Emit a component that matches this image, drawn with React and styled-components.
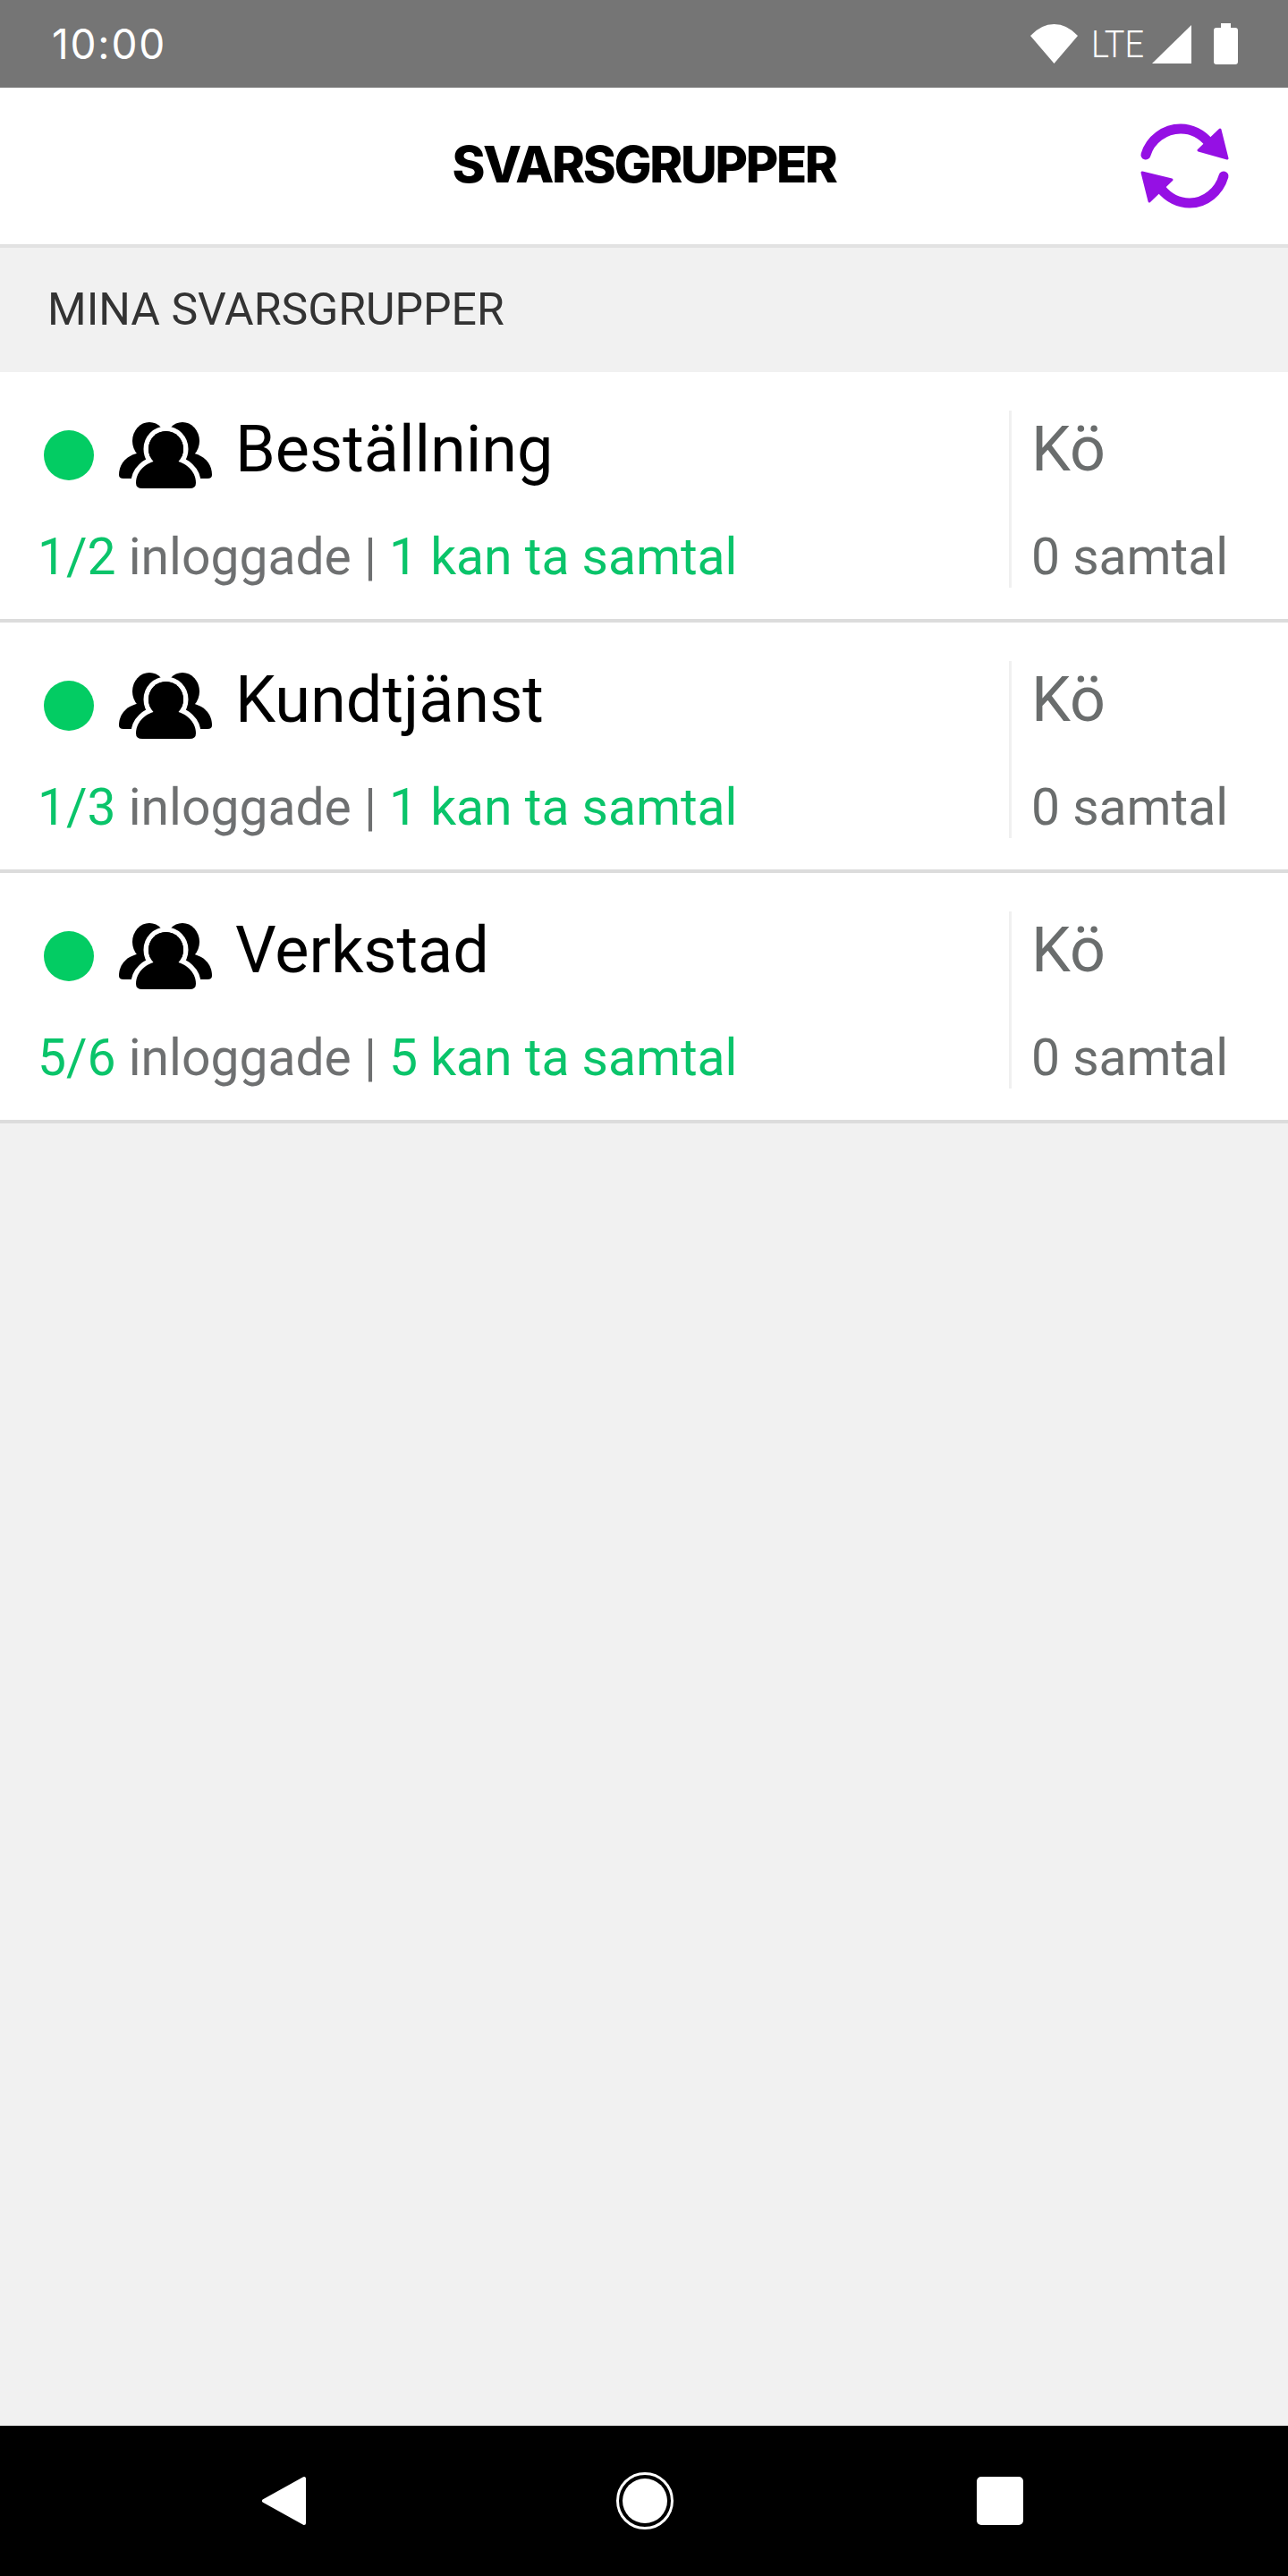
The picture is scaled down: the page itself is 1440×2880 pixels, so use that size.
import React from 'react'
import styled, { createGlobalStyle } from 'styled-components'

const GlobalStyle = createGlobalStyle`
  html, body {
    margin: 0;
    padding: 0;
    background: #f1f1f1;
  }
`

const Screen = styled.div`
  width: 1440px;
  height: 2880px;
  display: flex;
  flex-direction: column;
  background: #f1f1f1;
  font-family: Roboto, "Liberation Sans", sans-serif;
`

const StatusBar = styled.div`
  height: 98px;
  flex: none;
  display: flex;
  align-items: center;
  justify-content: space-between;
  padding: 0 56px 0 58px;
  box-sizing: border-box;
  background: #757575;
  color: #fff;
`

const Clock = styled.div`
  font-family: Inter, Roboto, sans-serif;
  font-size: 46px;
  font-weight: 400;
  letter-spacing: 1.8px;
  line-height: 98px;
`

const StatusIcons = styled.div`
  display: flex;
  align-items: center;
`

const Lte = styled.span`
  font-size: 43px;
  font-weight: 300;
  line-height: 98px;
  margin: 0 10px 0 15px;
  transform: scaleX(0.88);
  transform-origin: left center;
  width: 58px;
`

const Header = styled.header`
  height: 179px;
  flex: none;
  box-sizing: border-box;
  display: flex;
  align-items: center;
  justify-content: center;
  position: relative;
  background: #fff;
  border-bottom: 4px solid #e2e2e2;
`

const Title = styled.h1`
  margin: 0 0 4px;
  font-family: Inter, "Liberation Sans", sans-serif;
  font-size: 56px;
  font-weight: 800;
  letter-spacing: -2.3px;
  color: #000;
`

const RefreshButton = styled.div`
  position: absolute;
  top: 22px;
  right: 50px;
  width: 130px;
  height: 120px;
`

const SectionTitle = styled.div`
  height: 139px;
  flex: none;
  box-sizing: border-box;
  padding-left: 53px;
  font-size: 50px;
  font-weight: 400;
  line-height: 139px;
  color: #333;
`

const Row = styled.div`
  height: 280px;
  flex: none;
  box-sizing: border-box;
  display: flex;
  padding-top: 43px;
  background: #fff;
  border-bottom: 4px solid #dcdcdc;
`

const Main = styled.div`
  width: 1128px;
  flex: none;
`

const NameLine = styled.div`
  display: flex;
  align-items: center;
  height: 100px;
  padding-left: 49px;
`

const Dot = styled.span`
  width: 56px;
  height: 56px;
  border-radius: 50%;
  background: #03cc63;
  flex: none;
`

const Name = styled.span`
  font-size: 72px;
  font-weight: 400;
  line-height: 100px;
  color: #000;
  margin: -12px 0 0 25px;
`

const Stats = styled.div`
  margin-top: 28px;
  padding-left: 42px;
  font-size: 57px;
  line-height: 72px;
  color: #6e7071;
`

const Green = styled.span`
  color: #0ac46a;
`

const Queue = styled.div`
  flex: none;
  height: 198px;
  box-sizing: border-box;
  padding-left: 22px;
  border-left: 3px solid #f0f0f0;
  color: #6a6d6d;
`

const QueueTitle = styled.div`
  font-size: 70px;
  line-height: 100px;
  margin-top: -7px;
`

const QueueCount = styled.div`
  margin-top: 35px;
  font-size: 57px;
  line-height: 72px;
`

const NavBar = styled.div`
  margin-top: auto;
  height: 168px;
  flex: none;
  display: flex;
  align-items: center;
  padding-left: 116px;
  background: #000;
`

const NavSlot = styled.div`
  width: ${p => p.$width}px;
  display: flex;
  justify-content: center;
`

const Wifi = () => (
  <svg width="53" height="44" viewBox="0 0 53 44">
    <path d="M26.5 44 L0 13 Q12 0 26.5 0 Q41 0 53 13 Z" fill="#fff" />
  </svg>
)

const Signal = () => (
  <svg width="44" height="43" viewBox="0 0 44 43">
    <path d="M44 0 V43 H0 Z" fill="#fff" />
  </svg>
)

const Battery = () => (
  <svg width="27" height="46" viewBox="0 0 27 46" style={{ marginLeft: 25 }}>
    <path d="M8 0 H19 V5 H24 Q27 5 27 8 V43 Q27 46 24 46 H3 Q0 46 0 43 V8 Q0 5 3 5 H8 Z" fill="#fff" />
  </svg>
)

// drawn in crop coordinates of the reference, hence the odd viewBox
const Refresh = () => (
  <svg width="130" height="120" viewBox="0 0 130 120">
    <g fill="none" stroke="#9510e4" strokeWidth="11" strokeLinecap="round">
      <path d="M21 53 C26 36 42 24 60 24 C72 24 84 30 92 40" />
      <path d="M108 77 C103 94 88 107 70 107 C58 107 46 101 38 91" />
    </g>
    <g fill="#9510e4" stroke="#9510e4" strokeWidth="3" strokeLinejoin="round">
      <path d="M104 25 L112 57 L80 48 Z" />
      <path d="M17 73 L50 81 L25 105 Z" />
    </g>
  </svg>
)

const GroupIcon = () => (
  <svg width="106" height="76" viewBox="102 23 106 76" style={{ marginLeft: 27, flex: 'none' }}>
    <ellipse cx="137" cy="45" rx="19" ry="21" fill="#000" />
    <ellipse cx="174" cy="45" rx="19" ry="21" fill="#000" />
    <path d="M103 83 C103 70 112 60 128 58 L146 58 L146 87 L108 87 Q103 87 103 83 Z" fill="#000" />
    <path d="M207 83 C207 70 198 60 182 58 L164 58 L164 87 L202 87 Q207 87 207 83 Z" fill="#000" />
    <g fill="#000" stroke="#fff" strokeWidth="11" paintOrder="stroke">
      <ellipse cx="155.5" cy="54" rx="19.5" ry="20" />
      <path d="M122 92 C122 78 134 69 146 67 L165 67 C177 69 189 78 189 92 Q189 98 182 98 L129 98 Q122 98 122 92 Z" />
    </g>
    <ellipse cx="155.5" cy="54" rx="19.5" ry="20" fill="#000" />
  </svg>
)

const groups = [
  { name: 'Beställning', logged: '1/2', ready: 1 },
  { name: 'Kundtjänst', logged: '1/3', ready: 1 },
  { name: 'Verkstad', logged: '5/6', ready: 5 },
]

export default function App() {
  return (
    <Screen>
      <GlobalStyle />
      <StatusBar>
        <Clock>10:00</Clock>
        <StatusIcons>
          <Wifi />
          <Lte>LTE</Lte>
          <Signal />
          <Battery />
        </StatusIcons>
      </StatusBar>
      <Header>
        <Title>SVARSGRUPPER</Title>
        <RefreshButton>
          <Refresh />
        </RefreshButton>
      </Header>
      <SectionTitle>MINA SVARSGRUPPER</SectionTitle>
      {groups.map(group => (
        <Row key={group.name}>
          <Main>
            <NameLine>
              <Dot />
              <GroupIcon />
              <Name>{group.name}</Name>
            </NameLine>
            <Stats>
              <Green>{group.logged}</Green> inloggade | <Green>{group.ready} kan ta samtal</Green>
            </Stats>
          </Main>
          <Queue>
            <QueueTitle>Kö</QueueTitle>
            <QueueCount>0 samtal</QueueCount>
          </Queue>
        </Row>
      ))}
      <NavBar>
        <NavSlot $width={404}>
          <svg width="50" height="56" viewBox="0 0 50 56">
            <path d="M2 28 L47 3 V53 Z" fill="#fff" stroke="#fff" strokeWidth="4" strokeLinejoin="round" />
          </svg>
        </NavSlot>
        <NavSlot $width={401}>
          <svg width="64" height="64" viewBox="0 0 64 64">
            <circle cx="32" cy="32" r="30.5" fill="none" stroke="#fff" strokeWidth="3" />
            <circle cx="32" cy="32" r="25" fill="#fff" />
          </svg>
        </NavSlot>
        <NavSlot $width={394}>
          <svg width="52" height="54" viewBox="0 0 52 54">
            <rect width="52" height="54" rx="5" fill="#fff" />
          </svg>
        </NavSlot>
      </NavBar>
    </Screen>
  )
}
